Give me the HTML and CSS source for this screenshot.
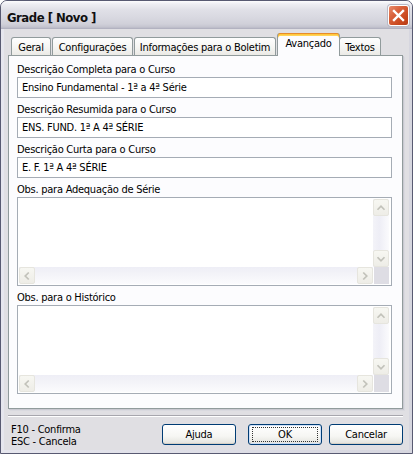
FILE: index.html
```html
<!DOCTYPE html>
<html lang="pt">
<head>
<meta charset="utf-8">
<title>Grade [ Novo ]</title>
<link rel="stylesheet" href="styles.css">
</head>
<body>
<div class="window">
  <div class="titlebar">
    <span class="title">Grade [ Novo ]</span>
    <div class="close">
      <svg width="19" height="19" viewBox="0 0 19 19"><path d="M5 5 L14 14 M14 5 L5 14" stroke="#fff" stroke-width="2.4" stroke-linecap="square" fill="none"/></svg>
    </div>
  </div>
  <div class="frame">
    <div class="client">
      <div class="tabs">
        <div class="tab tab-geral">Geral</div>
        <div class="tab tab-config">Configurações</div>
        <div class="tab tab-info">Informações para o Boletim</div>
        <div class="tab tab-avancado active">Avançado</div>
        <div class="tab tab-textos">Textos</div>
      </div>
      <div class="panel">
        <div class="field">
          <div class="label">Descrição Completa para o Curso</div>
          <div class="input">Ensino Fundamental - 1ª a 4ª Série</div>
        </div>
        <div class="field">
          <div class="label">Descrição Resumida para o Curso</div>
          <div class="input">ENS. FUND. 1ª A 4ª SÉRIE</div>
        </div>
        <div class="field">
          <div class="label">Descrição Curta para o Curso</div>
          <div class="input">E. F. 1ª A 4ª SÉRIE</div>
        </div>
        <div class="field">
          <div class="label">Obs. para Adequação de Série</div>
          <div class="memo">
            <div class="memo-text"></div>
            <div class="vscroll">
              <div class="sbtn"><svg width="16" height="16" viewBox="0 0 16 16"><polyline points="4,10 8,6 12,10" fill="none" stroke="#c2c2ba" stroke-width="2"/></svg></div>
              <div class="vtrack"></div>
              <div class="sbtn"><svg width="16" height="16" viewBox="0 0 16 16"><polyline points="4,6 8,10 12,6" fill="none" stroke="#c2c2ba" stroke-width="2"/></svg></div>
            </div>
            <div class="hscroll">
              <div class="sbtn"><svg width="16" height="16" viewBox="0 0 16 16"><polyline points="10,4 6,8 10,12" fill="none" stroke="#c2c2ba" stroke-width="2"/></svg></div>
              <div class="htrack"></div>
              <div class="sbtn"><svg width="16" height="16" viewBox="0 0 16 16"><polyline points="6,4 10,8 6,12" fill="none" stroke="#c2c2ba" stroke-width="2"/></svg></div>
            </div>
            <div class="corner"></div>
          </div>
        </div>
        <div class="field">
          <div class="label">Obs. para o Histórico</div>
          <div class="memo">
            <div class="memo-text"></div>
            <div class="vscroll">
              <div class="sbtn"><svg width="16" height="16" viewBox="0 0 16 16"><polyline points="4,10 8,6 12,10" fill="none" stroke="#c2c2ba" stroke-width="2"/></svg></div>
              <div class="vtrack"></div>
              <div class="sbtn"><svg width="16" height="16" viewBox="0 0 16 16"><polyline points="4,6 8,10 12,6" fill="none" stroke="#c2c2ba" stroke-width="2"/></svg></div>
            </div>
            <div class="hscroll">
              <div class="sbtn"><svg width="16" height="16" viewBox="0 0 16 16"><polyline points="10,4 6,8 10,12" fill="none" stroke="#c2c2ba" stroke-width="2"/></svg></div>
              <div class="htrack"></div>
              <div class="sbtn"><svg width="16" height="16" viewBox="0 0 16 16"><polyline points="6,4 10,8 6,12" fill="none" stroke="#c2c2ba" stroke-width="2"/></svg></div>
            </div>
            <div class="corner"></div>
          </div>
        </div>
      </div>
      <div class="separator"></div>
      <div class="footer">
        <div class="hints">
          <div>F10 - Confirma</div>
          <div>ESC - Cancela</div>
        </div>
        <div class="buttons">
          <div class="btn">Ajuda</div>
          <div class="btn btn-default"><span class="focus">OK</span></div>
          <div class="btn">Cancelar</div>
        </div>
      </div>
    </div>
  </div>
</div>
</body>
</html>
```

FILE: styles.css
```css
* { box-sizing: border-box; }
html, body { margin: 0; padding: 0; }
body {
  width: 413px;
  height: 454px;
  overflow: hidden;
  background: #ffffff;
  font-family: "DejaVu Sans Condensed", "DejaVu Sans", sans-serif;
  font-stretch: condensed;
  font-size: 11px;
  letter-spacing: -0.25px;
  color: #000;
}
.window {
  width: 413px;
  height: 454px;
  display: flex;
  flex-direction: column;
  border: 1px solid #585a72;
  border-radius: 7px 7px 0 0;
  background: #d9d9e2;
  overflow: hidden;
}
.titlebar {
  height: 28px;
  flex: none;
  display: flex;
  align-items: center;
  justify-content: space-between;
  padding: 3px 3px 0 6px;
  background: linear-gradient(#fdfdfe 0, #eeeef3 3px, #e0e0e7 9px, #d9d9e1 16px, #d0d0d9 23px, #c4c4cf 26px, #acacbc 28px);
}
.title {
  font-weight: bold;
  font-size: 13px;
  line-height: 15px;
  letter-spacing: -0.5px;
  padding-top: 1px;
  color: #101010;
}
.close {
  width: 21px;
  height: 21px;
  margin-top: -2px;
  border: 1px solid #ffffff;
  border-radius: 3px;
  background: linear-gradient(135deg, #e98c6d 0%, #d9623c 35%, #c8461c 75%, #b63c16 100%);
  box-shadow: 0 0 0 1px #b8b8c4;
  display: flex;
  align-items: center;
  justify-content: center;
}
.frame {
  flex: 1;
  display: flex;
  padding: 0 3px 3px 3px;
  background: linear-gradient(90deg, #e6e6ee, #d6d6df);
}
.client {
  flex: 1;
  display: flex;
  flex-direction: column;
  background: #e0dfe3;
  padding: 4px 6px 0 4px;
}
.tabs {
  height: 22px;
  display: flex;
  align-items: flex-end;
  padding-left: 3px;
}
.tab {
  height: 18px;
  border: 1px solid #919b9c;
  border-bottom: none;
  border-radius: 3px 3px 0 0;
  background: linear-gradient(#fefefe, #f6f6f4 50%, #ebeae6);
  display: flex;
  align-items: center;
  justify-content: center;
  padding-top: 1px;
  white-space: nowrap;
}
.tab-geral { width: 40px; }
.tab-config { width: 81px; margin-left: 1px; }
.tab-info { width: 142px; margin-left: 1px; }
.tab-avancado { width: 63px; margin-left: 1px; }
.tab-textos { width: 42px; margin-left: -1px; }
.tab.active {
  height: 23px;
  margin-bottom: -1px;
  position: relative;
  z-index: 1;
  background: #fcfcfe;
  border-top: none;
  box-shadow: inset 0 1px 0 #e68b2c, inset 0 2px 0 #ffc83c, inset 0 3px 0 #ffd35a;
  padding-top: 0;
  padding-bottom: 3px;
}
.panel {
  height: 354px;
  flex: none;
  background: #fcfcfe;
  border: 1px solid #919b9c;
  box-shadow: 1px 1px 0 #c9c9d1, 2px 2px 0 #d9d9df;
  padding: 7px 10px 0 8px;
  display: flex;
  flex-direction: column;
  gap: 5px;
}
.field {
  display: flex;
  flex-direction: column;
}
.label {
  line-height: 14px;
  height: 14px;
  white-space: nowrap;
}
.input {
  height: 21px;
  border: 1px solid #a5acb5;
  background: #ffffff;
  padding-left: 4px;
  line-height: 19px;
  white-space: nowrap;
}
.memo {
  height: 89px;
  border: 1px solid #a5acb5;
  background: #ffffff;
  padding: 1px 2px 1px 1px;
  display: grid;
  grid-template-columns: 1fr 16px;
  grid-template-rows: 1fr 17px;
}
.memo-text { background: #ffffff; }
.vscroll {
  display: flex;
  flex-direction: column;
  background: linear-gradient(90deg, #f3f3f8, #eeeef6 40%, #fbfbfd);
}
.vtrack { flex: 1; }
.hscroll {
  display: flex;
  background: linear-gradient(#eeeef6, #f3f3f8 40%, #fbfbfd);
}
.htrack { flex: 1; }
.sbtn {
  width: 16px;
  height: 17px;
  flex: none;
  border: 1px solid #e6e5de;
  border-radius: 2px;
  background: linear-gradient(#f7f7f2, #eeede7);
  display: flex;
  align-items: center;
  justify-content: center;
}
.corner {
  margin-left: 1px;
  background: #dedde4;
}
.separator {
  height: 2px;
  margin-top: 6px;
  border-top: 1px solid #a7a6ad;
  border-bottom: 1px solid #ffffff;
}
.footer {
  display: flex;
  justify-content: space-between;
  padding: 7px 0 0 3px;
}
.hints {
  line-height: 12px;
}
.buttons {
  display: flex;
}
.btn {
  width: 74px;
  height: 21px;
  border: 1px solid #003c74;
  border-radius: 3px;
  background: linear-gradient(#ffffff, #f6f6f3 60%, #e3e2dc);
  box-shadow: inset 0 -1px 0 #d6d0c5;
  display: flex;
  align-items: center;
  justify-content: center;
  line-height: 13px;
}
.btn + .btn { margin-left: 12px; }
.btn-default + .btn { margin-left: 7px; }
.btn-default {
  box-shadow: inset 0 0 0 1px #cfe0f8, inset 0 -1px 0 #e5a04a;
}
.focus {
  display: flex;
  align-items: center;
  justify-content: center;
  width: 66px;
  height: 15px;
  border: 1px dotted #333;
}
```
